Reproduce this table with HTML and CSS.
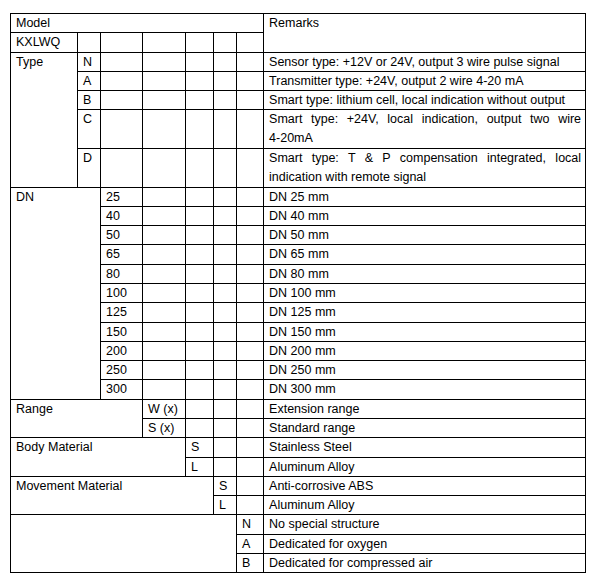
FILE: index.html
```html
<!DOCTYPE html>
<html>
<head>
<meta charset="utf-8">
<link rel="stylesheet" href="styles.css">
</head>
<body>
<div class="page">
<table class="spec">
<colgroup>
<col class="c1"><col class="c2"><col class="c3"><col class="c4"><col class="c5"><col class="c6"><col class="c7"><col class="c8">
</colgroup>
<tr><td colspan="7">Model</td><td rowspan="2">Remarks</td></tr>
<tr><td>KXLWQ</td><td></td><td></td><td></td><td></td><td></td><td></td></tr>

<tr><td rowspan="5">Type</td><td>N</td><td></td><td></td><td></td><td></td><td></td><td>Sensor type: +12V or 24V, output 3 wire pulse signal</td></tr>
<tr><td>A</td><td></td><td></td><td></td><td></td><td></td><td>Transmitter type: +24V, output 2 wire 4-20 mA</td></tr>
<tr><td>B</td><td></td><td></td><td></td><td></td><td></td><td>Smart type: lithium cell, local indication without output</td></tr>
<tr class="dbl"><td>C</td><td></td><td></td><td></td><td></td><td></td><td class="just">Smart type: +24V, local indication, output two wire <span class="nb">4-20mA</span></td></tr>
<tr class="dbl"><td>D</td><td></td><td></td><td></td><td></td><td></td><td class="just">Smart type: T &amp; P compensation integrated, local indication with remote signal</td></tr>

<tr><td rowspan="11" colspan="2">DN</td><td>25</td><td></td><td></td><td></td><td></td><td>DN 25 mm</td></tr>
<tr><td>40</td><td></td><td></td><td></td><td></td><td>DN 40 mm</td></tr>
<tr><td>50</td><td></td><td></td><td></td><td></td><td>DN 50 mm</td></tr>
<tr><td>65</td><td></td><td></td><td></td><td></td><td>DN 65 mm</td></tr>
<tr><td>80</td><td></td><td></td><td></td><td></td><td>DN 80 mm</td></tr>
<tr><td>100</td><td></td><td></td><td></td><td></td><td>DN 100 mm</td></tr>
<tr><td>125</td><td></td><td></td><td></td><td></td><td>DN 125 mm</td></tr>
<tr><td>150</td><td></td><td></td><td></td><td></td><td>DN 150 mm</td></tr>
<tr><td>200</td><td></td><td></td><td></td><td></td><td>DN 200 mm</td></tr>
<tr><td>250</td><td></td><td></td><td></td><td></td><td>DN 250 mm</td></tr>
<tr><td>300</td><td></td><td></td><td></td><td></td><td>DN 300 mm</td></tr>

<tr><td rowspan="2" colspan="3">Range</td><td>W (x)</td><td></td><td></td><td></td><td>Extension range</td></tr>
<tr><td>S (x)</td><td></td><td></td><td></td><td>Standard range</td></tr>

<tr><td rowspan="2" colspan="4">Body Material</td><td>S</td><td></td><td></td><td>Stainless Steel</td></tr>
<tr><td>L</td><td></td><td></td><td>Aluminum Alloy</td></tr>

<tr><td rowspan="2" colspan="5">Movement Material</td><td>S</td><td></td><td>Anti-corrosive ABS</td></tr>
<tr><td>L</td><td></td><td>Aluminum Alloy</td></tr>

<tr><td rowspan="3" colspan="6"></td><td>N</td><td>No special structure</td></tr>
<tr><td>A</td><td>Dedicated for oxygen</td></tr>
<tr><td>B</td><td>Dedicated for compressed air</td></tr>
</table>
</div>
</body>
</html>
```
FILE: styles.css
```css
html, body {
  margin: 0;
  padding: 0;
  background: #ffffff;
}
.page {
  padding: 13px 0 0 10px;
}
.spec {
  border-collapse: collapse;
  table-layout: fixed;
  width: 575px;
  font-family: "Liberation Sans", Arial, sans-serif;
  font-size: 12.5px;
  color: #000000;
}
.c1 { width: 67px; }
.c2 { width: 23px; }
.c3 { width: 42px; }
.c4 { width: 43px; }
.c5 { width: 28px; }
.c6 { width: 23px; }
.c7 { width: 27px; }
.c8 { width: 322px; }
.spec td {
  border: 1px solid #000000;
  padding: 0 4px 0 5px;
  line-height: 18.28px;
  height: 18.28px;
  vertical-align: top;
  white-space: nowrap;
  overflow: hidden;
}
.spec tr.dbl td {
  height: 37.56px;
}
.spec td.just {
  white-space: normal;
  text-align: justify;
  line-height: 18.8px;
}
.nb {
  white-space: nowrap;
}
```
